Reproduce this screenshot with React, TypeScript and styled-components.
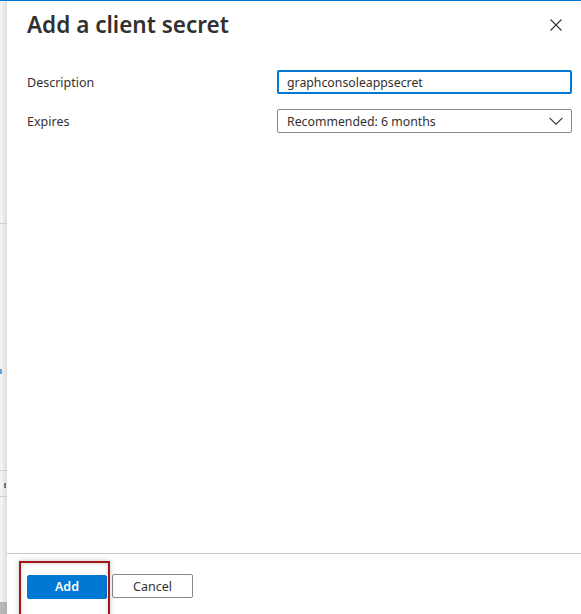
import React from "react";
import styled, { createGlobalStyle } from "styled-components";

const GlobalStyle = createGlobalStyle`
  html, body {
    margin: 0;
    padding: 0;
    height: 100%;
    background: #ffffff;
  }
  #root {
    height: 100%;
  }
  * {
    box-sizing: border-box;
  }
`;

const Page = styled.div`
  height: 614px;
  display: flex;
  flex-direction: column;
  overflow: hidden;
  font-family: "Segoe UI", "Noto Sans", "Open Sans", sans-serif;
  color: #323130;
`;

const TopBar = styled.div`
  height: 1px;
  background: #0078d4;
  flex-shrink: 0;
`;

const Body = styled.div`
  flex: 1;
  display: flex;
  min-height: 0;
`;

const Backdrop = styled.div`
  width: 7px;
  flex-shrink: 0;
  display: flex;
  flex-direction: column;
  background: linear-gradient(to right, #f4f4f4, #e9e9e9);
`;

const BackRule = styled.div<{ $top: number }>`
  margin-top: ${(p) => p.$top}px;
  height: 1px;
  background: #cfcfcf;
`;

const BackGlyph = styled.div<{ $top: number; $color: string; $left: number }>`
  margin-top: ${(p) => p.$top}px;
  margin-left: ${(p) => p.$left}px;
  height: 5px;
  width: 2px;
  background: ${(p) => p.$color};
`;

const BackScroll = styled.div`
  margin-top: auto;
  height: 12px;
  background: #b8b8b8;
`;

const Panel = styled.div`
  flex: 1;
  display: flex;
  flex-direction: column;
  background: #ffffff;
  box-shadow: -2px 0 4px rgba(0, 0, 0, 0.06);
`;

const Header = styled.div`
  display: flex;
  align-items: flex-start;
  justify-content: space-between;
  padding: 7px 18px 0 20px;
`;

const Title = styled.h1`
  margin: 0;
  font-size: 22.5px;
  font-weight: 600;
  line-height: 34px;
  color: #323130;
`;

const CloseButton = styled.button`
  border: 0;
  background: transparent;
  padding: 0;
  margin-top: 10px;
  width: 14px;
  height: 14px;
  display: flex;
  align-items: center;
  justify-content: center;
  color: #323130;
  cursor: pointer;
`;

const Form = styled.div`
  flex: 1;
  display: flex;
  flex-direction: column;
  gap: 15px;
  padding: 28px 9px 0 20px;
`;

const Row = styled.div`
  display: grid;
  grid-template-columns: 250px 1fr;
  align-items: center;
`;

const Label = styled.label`
  font-size: 12.5px;
  color: #323130;
`;

const TextInput = styled.input`
  height: 24px;
  width: 100%;
  border: 2px solid #0078d4;
  border-radius: 2px;
  padding: 0 8px;
  font-family: inherit;
  font-size: 12.3px;
  color: #323130;
  outline: none;
`;

const Select = styled.div`
  height: 24px;
  display: flex;
  align-items: center;
  justify-content: space-between;
  border: 1px solid #8a8886;
  border-radius: 2px;
  padding: 0 8px 0 9px;
  font-size: 12.3px;
  color: #323130;
`;

const Footer = styled.div`
  flex-shrink: 0;
  height: 61px;
  border-top: 1px solid #c8c6c4;
  display: flex;
  align-items: flex-start;
  gap: 5px;
  padding: 20px 0 0 20px;
`;

const ButtonWrap = styled.div`
  position: relative;
`;

const Highlight = styled.div`
  position: absolute;
  left: -8px;
  top: -13px;
  width: 91px;
  height: 60px;
  border: 2px solid #a4161a;
  box-shadow: 0 0 5px rgba(0, 0, 0, 0.25), inset 0 0 5px rgba(0, 0, 0, 0.2);
  pointer-events: none;
`;

const Button = styled.button<{ $primary?: boolean }>`
  height: 24px;
  width: ${(p) => (p.$primary ? 80 : 81)}px;
  border-radius: 2px;
  font-family: inherit;
  font-size: 12.5px;
  font-weight: ${(p) => (p.$primary ? 600 : 400)};
  color: ${(p) => (p.$primary ? "#ffffff" : "#323130")};
  background: ${(p) => (p.$primary ? "#0078d4" : "#ffffff")};
  border: 1px solid ${(p) => (p.$primary ? "#0078d4" : "#8a8886")};
  padding: 0;
  cursor: pointer;
`;

const CloseIcon = () => (
  <svg width="12" height="12" viewBox="0 0 12 12" fill="none">
    <path d="M0.5 0.5L11.5 11.5M11.5 0.5L0.5 11.5" stroke="currentColor" strokeWidth="1.1" />
  </svg>
);

const ChevronDown = () => (
  <svg width="14" height="8" viewBox="0 0 14 8" fill="none">
    <path d="M0.5 0.8L7 7.2L13.5 0.8" stroke="#323130" strokeWidth="1.1" />
  </svg>
);

export default function App() {
  return (
    <>
      <GlobalStyle />
      <Page>
        <TopBar />
        <Body>
          <Backdrop>
            <BackRule $top={222} />
            <BackGlyph $top={145} $left={0} $color="#5aa6e0" />
            <BackRule $top={96} />
            <BackGlyph $top={12} $left={4} $color="#6b7a88" />
            <BackRule $top={8} />
            <BackScroll />
          </Backdrop>
          <Panel>
            <Header>
              <Title>Add a client secret</Title>
              <CloseButton aria-label="Close">
                <CloseIcon />
              </CloseButton>
            </Header>
            <Form>
              <Row>
                <Label>Description</Label>
                <TextInput defaultValue="graphconsoleappsecret" />
              </Row>
              <Row>
                <Label>Expires</Label>
                <Select>
                  <span>Recommended: 6 months</span>
                  <ChevronDown />
                </Select>
              </Row>
            </Form>
            <Footer>
              <ButtonWrap>
                <Button $primary>Add</Button>
                <Highlight />
              </ButtonWrap>
              <Button>Cancel</Button>
            </Footer>
          </Panel>
        </Body>
      </Page>
    </>
  );
}
